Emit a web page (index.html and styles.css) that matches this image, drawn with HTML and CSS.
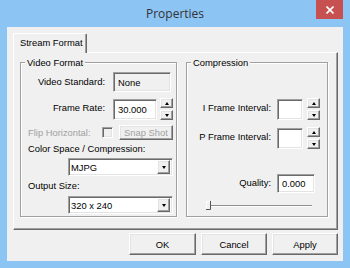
FILE: index.html
```html
<!DOCTYPE html>
<html>
<head>
<meta charset="utf-8">
<link rel="stylesheet" href="styles.css">
</head>
<body>
<div class="window">
  <div class="titlebar">
    <span></span>
    <div class="title">Properties</div>
    <div class="close">
      <svg width="8" height="8" viewBox="0 0 8 8"><path d="M0.5 0.5L7.5 7.5M7.5 0.5L0.5 7.5" stroke="#fff" stroke-width="1.6"/></svg>
    </div>
  </div>
  <div class="client">
    <div class="tabs"><div class="tab">Stream Format</div></div>
    <div class="panel">
      <div class="group video">
        <div class="group-title">Video Format</div>
        <div class="row r1">
          <span class="lbl">Video Standard:</span>
          <div class="edit ro std">None</div>
        </div>
        <div class="row r2">
          <span class="lbl">Frame Rate:</span>
          <div class="edit fr">30.000</div>
          <div class="spin"><div class="sbtn"><i class="up"></i></div><div class="sbtn"><i class="dn"></i></div></div>
        </div>
        <div class="row r3">
          <span class="flip">Flip Horizontal:</span>
          <span class="check"></span>
          <div class="btn snap">Snap Shot</div>
        </div>
        <div class="text t1">Color Space / Compression:</div>
        <div class="combo c1"><span class="val">MJPG</span><span class="drop"><i class="dn"></i></span></div>
        <div class="text t2">Output Size:</div>
        <div class="combo c2"><span class="val">320 x 240</span><span class="drop"><i class="dn"></i></span></div>
      </div>
      <div class="group comp">
        <div class="group-title">Compression</div>
        <div class="crow ri">
          <span class="clbl">I Frame Interval:</span>
          <div class="edit ie"></div>
          <div class="spin"><div class="sbtn"><i class="up"></i></div><div class="sbtn"><i class="dn"></i></div></div>
        </div>
        <div class="crow rp">
          <span class="clbl">P Frame Interval:</span>
          <div class="edit ie"></div>
          <div class="spin"><div class="sbtn"><i class="up"></i></div><div class="sbtn"><i class="dn"></i></div></div>
        </div>
        <div class="crow rq">
          <span class="clbl">Quality:</span>
          <div class="edit qe">0.000</div>
        </div>
        <div class="slider">
          <svg width="108" height="11" viewBox="0 0 108 11">
            <line x1="5" y1="5.5" x2="107" y2="5.5" stroke="#8f8f8f" stroke-width="1"/>
            <line x1="5" y1="6.5" x2="107" y2="6.5" stroke="#ffffff" stroke-width="1"/>
            <rect x="1" y="1" width="4" height="8" fill="#f0f0f0"/>
            <path d="M1.5 9V1.5H4.5" stroke="#ffffff" fill="none"/>
            <path d="M1 9.5H5.5V1" stroke="#555" fill="none"/>
          </svg>
        </div>
      </div>
    </div>
    <div class="buttons">
      <div class="btn pb ok">OK</div>
      <div class="btn pb">Cancel</div>
      <div class="btn pb">Apply</div>
    </div>
  </div>
</div>
</body>
</html>
```
FILE: styles.css
```css
html, body {
  margin: 0;
  padding: 0;
}
body {
  width: 350px;
  height: 268px;
  overflow: hidden;
  background: #8cc4f3;
  font-family: "Liberation Sans", Arial, sans-serif;
  font-size: 9.4px;
  color: #000;
}
.window {
  display: flex;
  flex-direction: column;
  height: 268px;
}
.titlebar {
  height: 27px;
  display: grid;
  grid-template-columns: 1fr auto 1fr;
}
.title {
  font-family: "Open Sans", "Noto Sans", sans-serif;
  font-size: 12px;
  line-height: 27px;
  color: #333;
}
.close {
  justify-self: end;
  align-self: start;
  width: 27px;
  height: 19px;
  margin-right: 7px;
  background: #c75050;
  display: flex;
  align-items: center;
  justify-content: center;
}
.close svg { display: block; }
.client {
  margin: 0 7px;
  height: 234px;
  box-sizing: border-box;
  background: #f0f0f0;
  padding: 6px 5px 0 6px;
}
.tabs {
  display: flex;
  height: 19px;
}
.tab {
  position: relative;
  z-index: 1;
  width: 74px;
  height: 20px;
  box-sizing: border-box;
  border-top: 1px solid #fff;
  border-left: 1px solid #fff;
  border-right: 1px solid #696969;
  box-shadow: inset -1px 0 #a0a0a0;
  border-radius: 2px 2px 0 0;
  background: #f0f0f0;
  padding-left: 6px;
  line-height: 18px;
}
.panel {
  height: 178px;
  box-sizing: border-box;
  border: 1px solid;
  border-color: #fff #696969 #696969 #fff;
  box-shadow: inset -1px -1px #a0a0a0;
  display: flex;
  gap: 9px;
  padding: 9px 9px 0 6px;
}
.group {
  height: 155px;
  box-sizing: border-box;
  border: 1px solid #a0a0a0;
  box-shadow: inset 1px 1px #fff, 1px 1px #fff;
  display: flex;
  flex-direction: column;
  align-items: flex-start;
}
.video { width: 157px; }
.comp { width: 142px; align-items: stretch; }
.group-title {
  width: fit-content;
  margin: -7px 0 0 4px;
  padding: 0 2px;
  line-height: 13px;
  height: 13px;
  background: #f0f0f0;
}
.row {
  display: flex;
  align-items: center;
}
.lbl {
  width: 84px;
  text-align: right;
  margin-right: 8px;
  line-height: 12px;
}
.r1 { margin-top: 3px; height: 20px; }
.r2 { margin-top: 6px; height: 22px; }
.r2 .lbl { padding-bottom: 2px; }
.r2 .fr { align-self: flex-end; }
.r3 { margin: 5px 0 0 7px; height: 15px; }

.edit {
  box-sizing: border-box;
  border: 1px solid;
  border-color: #a0a0a0 #fff #fff #a0a0a0;
  box-shadow: inset 1px 1px #696969, inset -1px -1px #e3e3e3;
  background: #fff;
  padding-left: 4px;
  display: flex;
  align-items: center;
}
.edit.ro { background: #f0f0f0; }
.std { width: 58px; height: 20px; }
.fr { width: 44px; height: 21px; margin-right: 3px; }

.spin {
  display: flex;
  flex-direction: column;
  gap: 2px;
  width: 13px;
}
.sbtn, .drop, .btn {
  box-sizing: border-box;
  border: 1px solid;
  border-color: #fff #696969 #696969 #fff;
  box-shadow: inset -1px -1px #a0a0a0, inset 1px 1px #e3e3e3;
  background: #f0f0f0;
  display: flex;
  align-items: center;
  justify-content: center;
}
.sbtn { height: 10px; }
i.up, i.dn {
  display: block;
  width: 0;
  height: 0;
  border-left: 2.5px solid transparent;
  border-right: 2.5px solid transparent;
}
i.up { border-bottom: 3px solid #000; }
i.dn { border-top: 3px solid #000; }

.flip {
  width: 74px;
  color: #a0a0a0;
  line-height: 12px;
}
.check {
  width: 11px;
  height: 11px;
  box-sizing: border-box;
  border: 1px solid;
  border-color: #a0a0a0 #fff #fff #a0a0a0;
  box-shadow: inset 1px 1px #696969, inset -1px -1px #e3e3e3;
  background: #f0f0f0;
}
.snap {
  width: 54px;
  height: 15px;
  margin-left: 6px;
  color: #a0a0a0;
}
.text { line-height: 12px; margin-left: 7px; }
.t1 { margin-top: 3px; }
.t2 { margin-top: 4px; }
.combo {
  width: 105px;
  height: 18px;
  margin-left: 47px;
  box-sizing: border-box;
  border: 1px solid;
  border-color: #a0a0a0 #fff #fff #a0a0a0;
  box-shadow: inset 1px 1px #696969, inset -1px -1px #e3e3e3;
  background: #fff;
  display: flex;
  align-items: stretch;
  padding: 1px 2px 1px 1px;
}
.c1 { margin-top: 3px; }
.c2 { margin-top: 4px; }
.combo .val {
  flex: 1;
  padding-left: 1px;
  display: flex;
  align-items: center;
}
.drop { width: 13px; }

.crow {
  display: flex;
  justify-content: flex-end;
  align-items: center;
  height: 22px;
}
.clbl {
  margin-right: 6px;
  line-height: 12px;
  padding-bottom: 2px;
}
.ri { margin-top: 29px; padding-right: 7px; }
.rp { margin-top: 7px; padding-right: 7px; }
.ie { width: 26px; height: 21px; margin-right: 4px; align-self: flex-end; }
.rq { margin-top: 25px; padding-right: 12px; height: 19px; }
.rq .clbl { padding-bottom: 1px; }
.qe { width: 38px; height: 19px; padding-left: 4px; }
.slider {
  margin: 7px 0 0 18px;
  height: 11px;
}
.slider svg { display: block; }

.buttons {
  display: flex;
  justify-content: flex-end;
  gap: 5px;
  margin-top: 3px;
}
.pb {
  width: 66px;
  height: 22px;
}
.pb.ok { width: 67px; }
```
